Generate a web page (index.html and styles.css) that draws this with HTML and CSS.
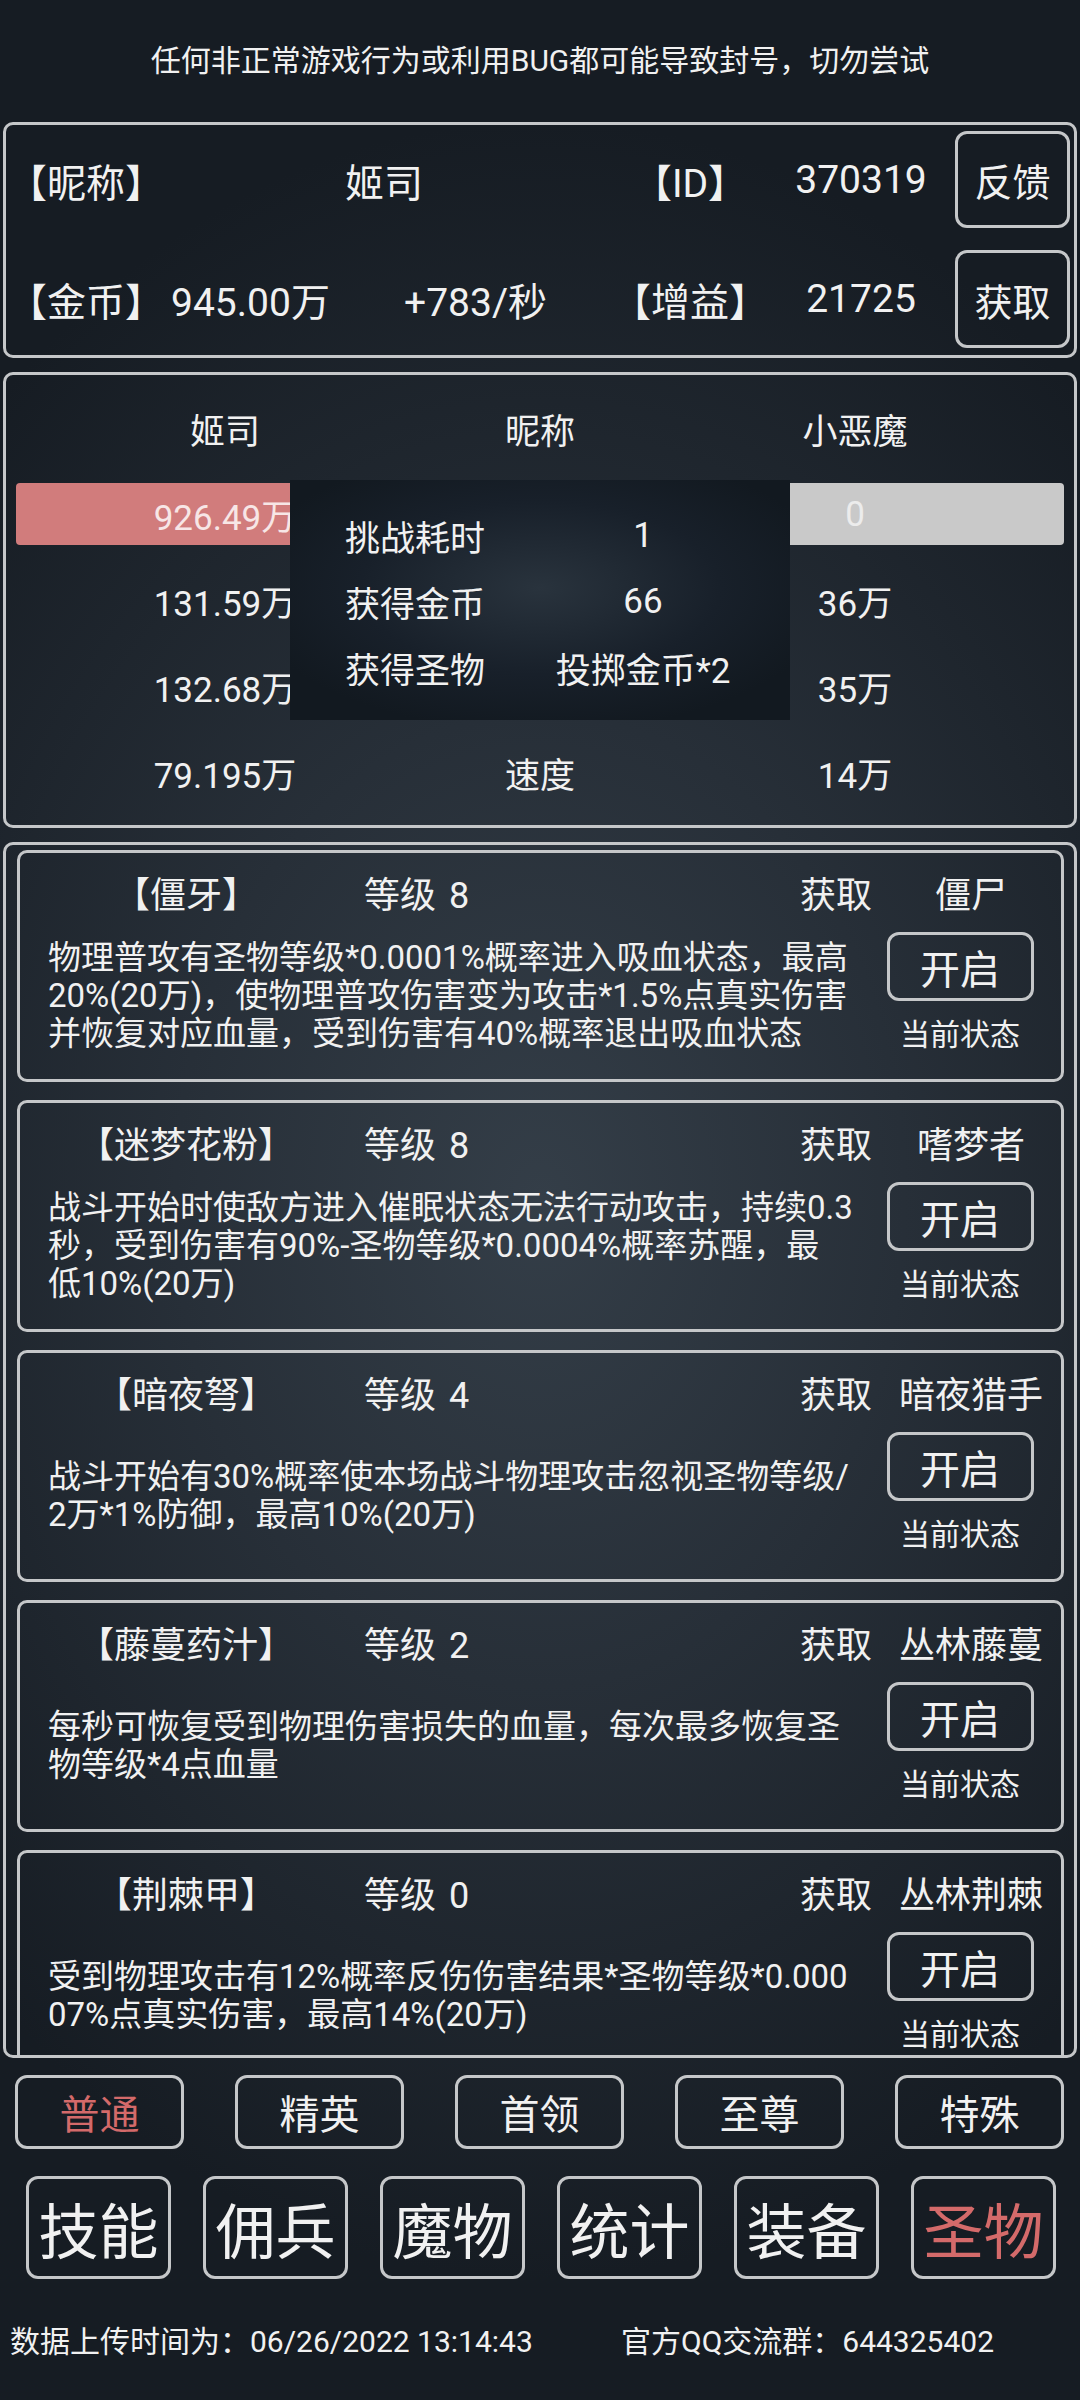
FILE: index.html
```html
<!DOCTYPE html>
<html lang="zh">
<head>
<meta charset="utf-8">
<title>圣物</title>
<link rel="stylesheet" href="styles.css">
</head>
<body>
<div class="page">
  <div class="notice">任何非正常游戏行为或利用BUG都可能导致封号，切勿尝试</div>

  <section class="panel info">
    <div class="info-row">
      <span class="c-label">【昵称】</span>
      <span class="c-val">姬司</span>
      <span class="c-label2">【ID】</span>
      <span class="c-val2">370319</span>
      <button class="btn-sq">反馈</button>
    </div>
    <div class="info-row">
      <span class="c-label">【金币】</span>
      <span class="c-gold"><span class="gold">945.00万</span><span class="rate">+783/秒</span></span>
      <span class="c-label2">【增益】</span>
      <span class="c-val2">21725</span>
      <button class="btn-sq">获取</button>
    </div>
  </section>

  <section class="panel battle">
    <div class="stat-row">
      <span>姬司</span><span>昵称</span><span>小恶魔</span>
    </div>
    <div class="bar-row">
      <div class="bar">
        <span class="hp-left">926.49万</span><span></span><span class="hp-right">0</span>
      </div>
    </div>
    <div class="stat-row">
      <span>131.59万</span><span></span><span>36万</span>
    </div>
    <div class="stat-row">
      <span>132.68万</span><span></span><span>35万</span>
    </div>
    <div class="stat-row">
      <span>79.195万</span><span>速度</span><span>14万</span>
    </div>
    <div class="result">
      <div class="result-row"><span>挑战耗时</span><span class="rv">1</span></div>
      <div class="result-row"><span>获得金币</span><span class="rv">66</span></div>
      <div class="result-row"><span>获得圣物</span><span class="rv">投掷金币*2</span></div>
    </div>
  </section>

  <section class="panel relics">
    <div class="card">
      <div class="card-head">
        <span class="r-name">【僵牙】</span><span class="r-lv">等级 8</span><span class="r-get">获取</span><span class="r-src">僵尸</span>
      </div>
      <div class="card-body">
        <p class="desc">物理普攻有圣物等级*0.0001%概率进入吸血状态，最高<br>20%(20万)，使物理普攻伤害变为攻击*1.5%点真实伤害<br>并恢复对应血量，受到伤害有40%概率退出吸血状态</p>
        <div class="ctrl"><button class="btn-on">开启</button><span class="state">当前状态</span></div>
      </div>
    </div>
    <div class="card">
      <div class="card-head">
        <span class="r-name">【迷梦花粉】</span><span class="r-lv">等级 8</span><span class="r-get">获取</span><span class="r-src">嗜梦者</span>
      </div>
      <div class="card-body">
        <p class="desc">战斗开始时使敌方进入催眠状态无法行动攻击，持续0.3<br>秒，受到伤害有90%-圣物等级*0.0004%概率苏醒，最<br>低10%(20万)</p>
        <div class="ctrl"><button class="btn-on">开启</button><span class="state">当前状态</span></div>
      </div>
    </div>
    <div class="card">
      <div class="card-head">
        <span class="r-name">【暗夜弩】</span><span class="r-lv">等级 4</span><span class="r-get">获取</span><span class="r-src">暗夜猎手</span>
      </div>
      <div class="card-body">
        <p class="desc">战斗开始有30%概率使本场战斗物理攻击忽视圣物等级/<br>2万*1%防御，最高10%(20万)</p>
        <div class="ctrl"><button class="btn-on">开启</button><span class="state">当前状态</span></div>
      </div>
    </div>
    <div class="card">
      <div class="card-head">
        <span class="r-name">【藤蔓药汁】</span><span class="r-lv">等级 2</span><span class="r-get">获取</span><span class="r-src">丛林藤蔓</span>
      </div>
      <div class="card-body">
        <p class="desc">每秒可恢复受到物理伤害损失的血量，每次最多恢复圣<br>物等级*4点血量</p>
        <div class="ctrl"><button class="btn-on">开启</button><span class="state">当前状态</span></div>
      </div>
    </div>
    <div class="card">
      <div class="card-head">
        <span class="r-name">【荆棘甲】</span><span class="r-lv">等级 0</span><span class="r-get">获取</span><span class="r-src">丛林荆棘</span>
      </div>
      <div class="card-body">
        <p class="desc">受到物理攻击有12%概率反伤伤害结果*圣物等级*0.000<br>07%点真实伤害，最高14%(20万)</p>
        <div class="ctrl"><button class="btn-on">开启</button><span class="state">当前状态</span></div>
      </div>
    </div>
  </section>

  <nav class="tabs">
    <button class="tab active">普通</button>
    <button class="tab">精英</button>
    <button class="tab">首领</button>
    <button class="tab">至尊</button>
    <button class="tab">特殊</button>
  </nav>

  <nav class="menu">
    <button class="mbtn">技能</button>
    <button class="mbtn">佣兵</button>
    <button class="mbtn">魔物</button>
    <button class="mbtn">统计</button>
    <button class="mbtn">装备</button>
    <button class="mbtn active">圣物</button>
  </nav>

  <footer class="footer">
    <span>数据上传时间为：06/26/2022 13:14:43</span>
    <span>官方QQ交流群：644325402</span>
  </footer>
</div>
</body>
</html>
```

FILE: styles.css
```css
html, body {
  margin: 0;
  padding: 0;
}
body {
  width: 1080px;
  height: 2400px;
  overflow: hidden;
  background-color: #151b22;
  background-image: radial-gradient(ellipse 75% 45% at 50% 50%, #343e48 0%, #272f38 45%, #161c23 100%);
  font-family: Roboto, "Noto Sans CJK SC", sans-serif;
  color: #f1f1f1;
}
button {
  font-family: inherit;
  color: #f1f1f1;
  background: transparent;
  padding: 0;
  margin: 0;
  cursor: pointer;
}
.page {
  padding: 0 3px;
}
.notice {
  height: 120px;
  box-sizing: border-box;
  padding-bottom: 5px;
  display: flex;
  align-items: center;
  justify-content: center;
  font-size: 30px;
}
.panel {
  border: 3px solid #c5c7c9;
  border-radius: 10px;
  box-sizing: border-box;
}

/* info panel */
.info {
  margin-top: 2px;
  padding: 6px 4px 7px 2px;
}
.info-row {
  display: grid;
  grid-template-columns: 154px 444px 168px 174px 1fr;
  align-items: center;
  height: 97px;
  font-size: 39px;
}
.info-row + .info-row {
  margin-top: 22px;
  height: 98px;
}
.c-label {
  white-space: nowrap;
}
.c-val, .c-label2, .c-val2 {
  text-align: center;
  white-space: nowrap;
}
.c-gold {
  display: grid;
  grid-template-columns: 183px 1fr;
  align-items: center;
  white-space: nowrap;
}
.gold {
  padding-left: 9px;
}
.rate {
  text-align: center;
}
.btn-sq {
  justify-self: end;
  width: 115px;
  height: 100%;
  border: 3px solid #c5c7c9;
  border-radius: 12px;
  font-size: 38px;
  box-sizing: border-box;
}

/* battle panel */
.battle {
  margin-top: 14px;
  padding: 10px 0;
  position: relative;
}
.stat-row {
  height: 86px;
  display: grid;
  grid-template-columns: repeat(3, 315px);
  justify-content: center;
  align-items: center;
  text-align: center;
  font-size: 35px;
}
.bar-row {
  height: 86px;
  display: flex;
  align-items: center;
  padding: 0 10px;
}
.bar {
  flex: 1;
  height: 62px;
  border-radius: 4px;
  background: linear-gradient(90deg, #d17c7c 50%, #c9c9c9 50%);
  display: grid;
  grid-template-columns: repeat(3, 315px);
  justify-content: center;
  align-items: center;
  text-align: center;
  font-size: 35px;
}
.hp-left {
  color: #f7e6e6;
}
.hp-right {
  color: #ececec;
}
.result {
  position: absolute;
  left: 284px;
  top: 105px;
  width: 500px;
  height: 240px;
  box-sizing: border-box;
  padding: 22px 9px 20px 55px;
  background: radial-gradient(ellipse 60% 60% at 50% 45%, #29333d 0%, #18202a 60%, #121920 100%);
  font-size: 35px;
}
.result-row {
  height: 66px;
  display: grid;
  grid-template-columns: 160px 1fr;
  align-items: center;
}
.rv {
  text-align: center;
}

/* relics panel */
.relics {
  margin-top: 14px;
  height: 1216px;
  overflow: hidden;
  padding: 5px 10px 0 11px;
  display: flex;
  flex-direction: column;
  gap: 18px;
}
.card {
  flex-shrink: 0;
  height: 232px;
  box-sizing: border-box;
  border: 3px solid #c5c7c9;
  border-radius: 10px;
}
.card-head {
  height: 78px;
  display: grid;
  grid-template-columns: 332px 1fr 120px 150px;
  padding-right: 15px;
  align-items: center;
  font-size: 36px;
}
.r-name, .r-get, .r-src {
  text-align: center;
  white-space: nowrap;
}
.r-lv {
  padding-left: 12px;
  word-spacing: 4px;
}
.card-body {
  height: 129px;
  display: grid;
  grid-template-columns: 1fr 180px;
  padding: 0 11px 0 28px;
}
.desc {
  margin: 0;
  align-self: center;
  font-size: 33px;
  line-height: 38px;
  white-space: nowrap;
}
.ctrl {
  padding-top: 1px;
  display: flex;
  flex-direction: column;
  align-items: center;
}
.btn-on {
  width: 147px;
  height: 69px;
  border: 3px solid #c5c7c9;
  border-radius: 12px;
  font-size: 40px;
  box-sizing: border-box;
}
.state {
  margin-top: 16px;
  font-size: 30px;
  line-height: 36px;
}

/* tabs */
.tabs {
  margin-top: 17px;
  display: flex;
  justify-content: space-between;
  padding: 0 13px 0 12px;
}
.tab {
  width: 169px;
  height: 74px;
  box-sizing: border-box;
  border: 3px solid #c5c7c9;
  border-radius: 12px;
  font-size: 40px;
}
.menu {
  margin-top: 27px;
  display: flex;
  justify-content: space-between;
  padding: 0 21px 0 23px;
}
.mbtn {
  width: 145px;
  height: 103px;
  box-sizing: border-box;
  border: 3px solid #c5c7c9;
  border-radius: 12px;
  font-size: 60px;
}
.tab.active, .mbtn.active {
  color: #d46a6a;
}

/* footer */
.footer {
  margin-top: 45px;
  display: grid;
  grid-template-columns: 611px 1fr;
  padding-left: 7px;
  height: 36px;
  line-height: 36px;
  font-size: 30px;
  white-space: nowrap;
}
```
